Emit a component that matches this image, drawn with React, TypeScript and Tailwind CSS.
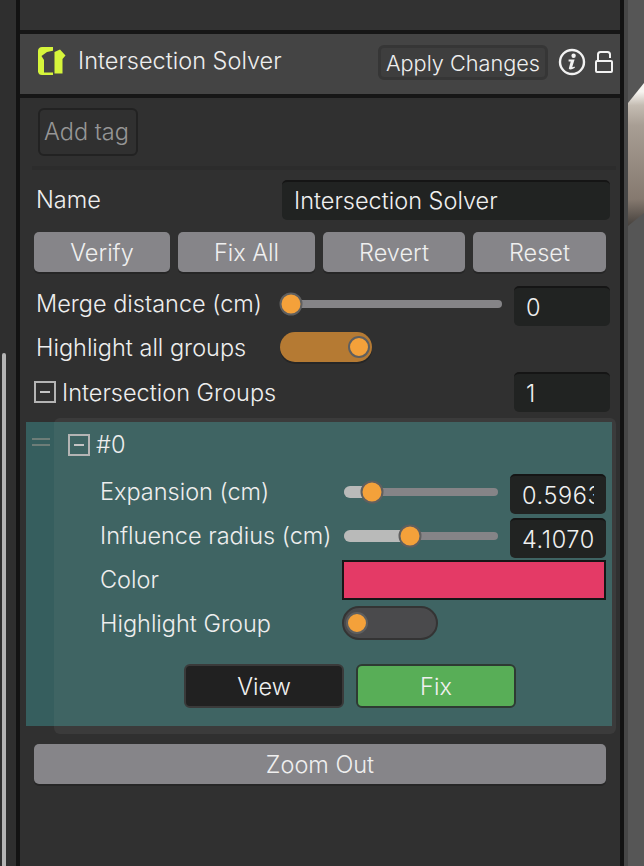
const font = { fontFamily: 'Inter, "Noto Sans", sans-serif' }

function ShirtIcon() {
  return (
    <svg width="28" height="28" viewBox="0 0 28 28" className="shrink-0 -mt-[6px]">
      <path d="M4 0H15V28H4Q0.5 28 0 24.5V3.5Q0.5 0 4 0Z" fill="#d6f53b" />
      <path d="M16 3.5L9 5L3.5 9L6 13V25.5H16Z" fill="#444444" />
      <path d="M16.5 5L22 2.5L27.5 8.5L24.5 12V26.5H16.5Z" fill="#d6f53b" />
    </svg>
  )
}

function InfoIcon() {
  return (
    <svg width="28" height="28" viewBox="0 0 28 28" className="shrink-0">
      <circle cx="14" cy="14" r="12" fill="none" stroke="#f2f2f2" strokeWidth="2.4" />
      <circle cx="15.6" cy="7.8" r="2.2" fill="#f2f2f2" />
      <path d="M10.6 11.6H16.6L14.4 18.6Q14.1 19.8 16.4 18.4L17 19.8Q11.8 23 10.8 20.4L12.7 13.6H10.6Z" fill="#f2f2f2" />
    </svg>
  )
}

function LockIcon() {
  return (
    <svg width="18" height="22" viewBox="0 0 18 22" className="shrink-0">
      <path d="M3 10V3.5Q3 1 5.5 1H12.5Q15 1 15 3.5V7" fill="none" stroke="#f2f2f2" strokeWidth="2" />
      <rect x="1" y="10" width="16" height="11" rx="1" fill="none" stroke="#f2f2f2" strokeWidth="2" />
    </svg>
  )
}

function Foldout() {
  return (
    <div className="w-[22px] h-[22px] border-2 border-[#b4b4b4] flex items-center justify-center shrink-0">
      <div className="w-[10px] h-[2px] bg-[#c4c4c4]" />
    </div>
  )
}

function NumberField({ value, className }: { value: string; className: string }) {
  return (
    <div className={`h-[40px] rounded-[5px] bg-[#212322] border-t-2 border-[#151515] text-[#f0f0f0] tracking-[0.6px] shrink-0 pl-[12px] pr-[12px] pt-[4px] ${className}`}>
      <div className="overflow-hidden whitespace-nowrap">{value}</div>
    </div>
  )
}

function Slider({ percent, fill, className }: { percent: number; fill?: boolean; className: string }) {
  return (
    <div className={`relative h-[8px] rounded-full bg-[#858487] shrink-0 ${className}`}>
      {fill && <div className="absolute left-0 top-1/2 -translate-y-1/2 h-[12px] rounded-full bg-[#b9bab9]" style={{ width: `${percent}%` }} />}
      <div
        className="absolute top-1/2 -translate-x-1/2 -translate-y-1/2 w-[23px] h-[23px] rounded-full bg-[#f4a13a] border-2 border-[#5f5f5f]"
        style={{ left: `${percent}%` }}
      />
    </div>
  )
}

function GrayButton({ label, className }: { label: string; className: string }) {
  return (
    <button className={`h-[40px] pt-[1px] rounded-[5px] bg-[#868589] text-[#efefef] shadow-[0_2px_0_#262626] ${className}`}>{label}</button>
  )
}

export default function App() {
  return (
    <div className="w-[644px] h-[866px] flex overflow-hidden text-[23.5px] leading-[32px] text-[#eeeeee] font-light" style={font}>
      <div className="w-[16px] bg-[#2f2f2f] pt-[353px] pl-[2px]">
        <div className="w-[4px] h-full rounded-t-full bg-[#b4b4b4]" />
      </div>
      <div className="w-[4px] bg-[#131313]" />

      <div className="w-[600px] bg-[#303030] flex flex-col">
        <div className="h-[30px] bg-[#323232]" />
        <div className="h-[68px] bg-[#444444] border-y-4 border-[#161616] flex items-center pl-[18px]">
          <ShirtIcon />
          <span className="ml-[12px] w-[300px] -mt-[6px]">Intersection Solver</span>
          <div className="w-[170px] h-[35px] -mt-[3px] rounded-[6px] bg-[#3e3e3e] border-[3px] border-[#363636] flex items-center justify-center text-[21.7px] text-[#efefef] whitespace-nowrap">
            Apply Changes
          </div>
          <div className="ml-[10px] -mt-[4px]"><InfoIcon /></div>
          <div className="ml-[9px] -mt-[4px]"><LockIcon /></div>
        </div>

        <div className="ml-[18px] mt-[10px] pr-[3px] w-[100px] h-[48px] rounded-[6px] bg-[#303030] border-2 border-[#222222] flex items-center justify-center text-[#969696]">
          Add tag
        </div>
        <div className="ml-[12px] mt-[10px] w-[584px] h-[4px] bg-[#2c2c2c]" />

        <div className="mt-[10px] h-[40px] flex items-center pl-[16px]">
          <span className="w-[246px]">Name</span>
          <div className="w-[328px] h-[40px] rounded-[5px] bg-[#212322] border-t-2 border-[#151515] pl-[12px] flex items-center text-[#f0f0f0]">Intersection Solver</div>
        </div>

        <div className="mt-[12px] ml-[14px] flex gap-[8px]">
          <GrayButton label="Verify" className="w-[136px]" />
          <GrayButton label="Fix All" className="w-[137px]" />
          <GrayButton label="Revert" className="w-[142px]" />
          <GrayButton label="Reset" className="w-[133px]" />
        </div>

        <div className="mt-[14px] h-[40px] flex items-center pl-[16px]">
          <span className="w-[244px] whitespace-nowrap -mt-[5px]">Merge distance (cm)</span>
          <Slider percent={5} className="w-[222px] -mt-[4px]" />
          <NumberField value="0" className="ml-[12px] w-[96px]" />
        </div>

        <div className="mt-[6px] h-[30px] flex items-center pl-[16px]">
          <span className="w-[244px] pt-[1px]">Highlight all groups</span>
          <div className="w-[92px] h-[30px] rounded-full bg-[#b57a33] flex items-center justify-end pr-[2px] shadow-[0_2px_0_#262626]">
            <div className="w-[22px] h-[22px] rounded-full bg-[#f4a13a] border-2 border-[#5f5f5f]" />
          </div>
        </div>

        <div className="mt-[10px] h-[40px] flex items-center pl-[14px]">
          <Foldout />
          <span className="ml-[6px] w-[452px] pt-[1px]">Intersection Groups</span>
          <NumberField value="1" className="w-[96px]" />
        </div>

        <div className="relative mt-[6px] h-[316px]">
          <div className="absolute left-[34px] top-0 w-[562px] h-[316px] rounded-[6px] bg-[#3b3b3b]" />
          <div className="absolute left-[6px] top-[4px] w-[586px] h-[304px] flex">
            <div className="w-[28px] bg-[#365e5e] pt-[16px] pl-[6px]">
              <div className="w-[18px] h-[8px] border-y-2 border-[#6d7d78]" />
            </div>
            <div className="flex-1 bg-[#3f6463] pl-[14px] pt-[12px]">
              <div className="h-[22px] flex items-center">
                <Foldout />
                <span className="ml-[6px]">#0</span>
              </div>
              <div className="mt-[18px] h-[40px] flex items-center pl-[32px]">
                <span className="w-[244px] -mt-[5px]">Expansion (cm)</span>
                <Slider percent={18} fill className="w-[154px] -mt-[4px]" />
                <NumberField value="0.5963" className="ml-[12px] w-[96px]" />
              </div>
              <div className="mt-[4px] h-[40px] flex items-center pl-[32px]">
                <span className="w-[244px] -mt-[5px] whitespace-nowrap">Influence radius (cm)</span>
                <Slider percent={43} fill className="w-[154px] -mt-[4px]" />
                <NumberField value="4.1070" className="ml-[12px] w-[96px]" />
              </div>
              <div className="mt-[2px] h-[40px] flex items-center pl-[32px]">
                <span className="w-[242px]">Color</span>
                <div className="w-[264px] h-[40px] bg-[#e43a66] border-2 border-[#161616]" />
              </div>
              <div className="mt-[6px] h-[34px] flex items-center pl-[32px]">
                <span className="w-[242px] pt-[1px]">Highlight Group</span>
                <div className="w-[96px] h-[34px] rounded-full bg-[#4a4a4c] border-2 border-[#343434] flex items-center pl-[2px]">
                  <div className="w-[22px] h-[22px] rounded-full bg-[#f4a13a] border-2 border-[#5f5f5f]" />
                </div>
              </div>
              <div className="mt-[24px] pl-[116px] flex gap-[12px]">
                <button className="w-[160px] h-[44px] pt-[1px] rounded-[6px] bg-[#212121] border-2 border-[#3a3a3a] text-[#f0f0f0]">View</button>
                <button className="w-[160px] h-[44px] pt-[1px] rounded-[6px] bg-[#58ae57] border-2 border-[#2e3a33] text-[#f0f0f0]">Fix</button>
              </div>
            </div>
          </div>
        </div>

        <GrayButton label="Zoom Out" className="mt-[10px] ml-[14px] w-[572px] shrink-0" />
      </div>

      <div className="w-[4px] bg-[#131313]" />
      <div className="w-[4px] bg-[#474747]" />
      <div className="relative flex-1 bg-[#565656]">
        <svg className="absolute left-0 top-0" width="16" height="240" viewBox="0 0 16 240">
          <defs>
            <linearGradient id="skin" gradientUnits="userSpaceOnUse" x1="6" y1="92" x2="10" y2="226">
              <stop offset="0" stopColor="#f6f4f0" />
              <stop offset="0.1" stopColor="#c4bcb2" />
              <stop offset="0.25" stopColor="#a89e94" />
              <stop offset="0.8" stopColor="#85796f" />
              <stop offset="1" stopColor="#45403c" />
            </linearGradient>
          </defs>
          <path d="M16 83L0 103V226L16 213Z" fill="url(#skin)" />
        </svg>
      </div>
    </div>
  )
}
